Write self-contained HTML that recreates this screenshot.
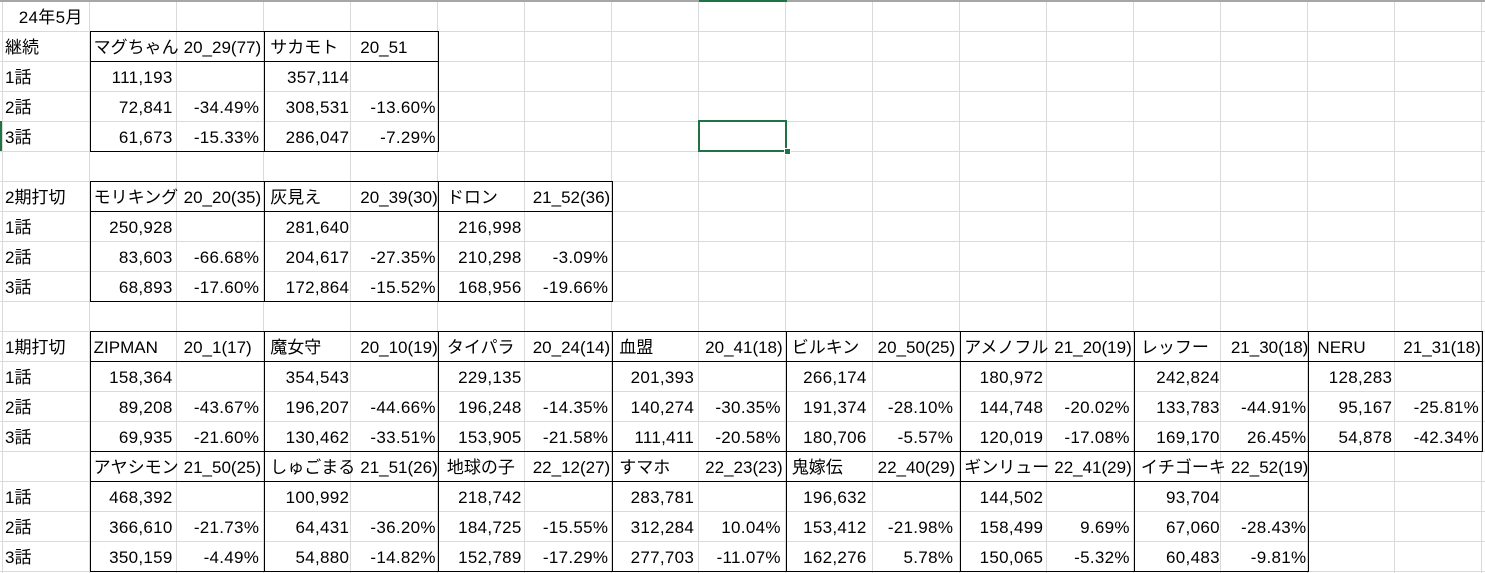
<!DOCTYPE html>
<html><head><meta charset="utf-8">
<style>
html,body{margin:0;padding:0;background:#fff;width:1485px;height:573px;overflow:hidden;position:relative}
.grid{position:absolute;left:0;top:0;width:1485px;height:573px;
background-image:
linear-gradient(to right, transparent 0, transparent 86px, #dadada 86px, #dadada 87px),
linear-gradient(to bottom, #dadada 0, #dadada 1px, transparent 1px, transparent 30px);
background-size:87px 100%, 100% 30px;
background-position:3px 0, 0 1px;}
.topline{position:absolute;left:0;top:0;width:1485px;height:2px;background:#a6a6a6}
.hsel{position:absolute;left:699px;top:0;width:88px;height:2px;background:#217346}
table{position:absolute;left:0;top:1px;border-collapse:collapse;table-layout:fixed;
font-family:"Liberation Sans","Noto Sans CJK JP",sans-serif;font-size:17px;color:#000}
td{height:30px;padding:4px 0 0 5px;white-space:nowrap;overflow:hidden;line-height:26px;box-sizing:border-box}
td.r{text-align:right;padding-right:6px;letter-spacing:0.3px}
.b{position:absolute;background:#000}
.sel{position:absolute;left:698px;top:120px;width:85px;height:28px;border:2px solid #217346}
.hd{position:absolute;left:784px;top:148px;width:5px;height:5px;background:#217346;border:1px solid #fff}
</style></head><body>
<div class="grid"></div>
<div class="topline"></div><div class="hsel"></div>
<table>
<colgroup><col style="width:90px"><col style="width:87px"><col style="width:87px"><col style="width:87px"><col style="width:87px"><col style="width:87px"><col style="width:87px"><col style="width:87px"><col style="width:87px"><col style="width:87px"><col style="width:87px"><col style="width:87px"><col style="width:87px"><col style="width:87px"><col style="width:87px"><col style="width:87px"><col style="width:87px"></colgroup>
<tr><td class="r">24年5月</td><td></td><td></td><td></td><td></td><td></td><td></td><td></td><td></td><td></td><td></td><td></td><td></td><td></td><td></td><td></td><td></td></tr>
<tr><td>継続</td><td>マグちゃん</td><td>20_29(77)</td><td>サカモト</td><td>20_51</td><td></td><td></td><td></td><td></td><td></td><td></td><td></td><td></td><td></td><td></td><td></td><td></td></tr>
<tr><td>1話</td><td class="r">111,193</td><td></td><td class="r">357,114</td><td></td><td></td><td></td><td></td><td></td><td></td><td></td><td></td><td></td><td></td><td></td><td></td><td></td></tr>
<tr><td>2話</td><td class="r">72,841</td><td class="r">-34.49%</td><td class="r">308,531</td><td class="r">-13.60%</td><td></td><td></td><td></td><td></td><td></td><td></td><td></td><td></td><td></td><td></td><td></td><td></td></tr>
<tr><td>3話</td><td class="r">61,673</td><td class="r">-15.33%</td><td class="r">286,047</td><td class="r">-7.29%</td><td></td><td></td><td></td><td></td><td></td><td></td><td></td><td></td><td></td><td></td><td></td><td></td></tr>
<tr><td></td><td></td><td></td><td></td><td></td><td></td><td></td><td></td><td></td><td></td><td></td><td></td><td></td><td></td><td></td><td></td><td></td></tr>
<tr><td>2期打切</td><td>モリキング</td><td>20_20(35)</td><td>灰見え</td><td>20_39(30)</td><td>ドロン</td><td>21_52(36)</td><td></td><td></td><td></td><td></td><td></td><td></td><td></td><td></td><td></td><td></td></tr>
<tr><td>1話</td><td class="r">250,928</td><td></td><td class="r">281,640</td><td></td><td class="r">216,998</td><td></td><td></td><td></td><td></td><td></td><td></td><td></td><td></td><td></td><td></td><td></td></tr>
<tr><td>2話</td><td class="r">83,603</td><td class="r">-66.68%</td><td class="r">204,617</td><td class="r">-27.35%</td><td class="r">210,298</td><td class="r">-3.09%</td><td></td><td></td><td></td><td></td><td></td><td></td><td></td><td></td><td></td><td></td></tr>
<tr><td>3話</td><td class="r">68,893</td><td class="r">-17.60%</td><td class="r">172,864</td><td class="r">-15.52%</td><td class="r">168,956</td><td class="r">-19.66%</td><td></td><td></td><td></td><td></td><td></td><td></td><td></td><td></td><td></td><td></td></tr>
<tr><td></td><td></td><td></td><td></td><td></td><td></td><td></td><td></td><td></td><td></td><td></td><td></td><td></td><td></td><td></td><td></td><td></td></tr>
<tr><td>1期打切</td><td>ZIPMAN</td><td>20_1(17)</td><td>魔女守</td><td>20_10(19)</td><td>タイパラ</td><td>20_24(14)</td><td>血盟</td><td>20_41(18)</td><td>ビルキン</td><td>20_50(25)</td><td>アメノフル</td><td>21_20(19)</td><td>レッフー</td><td>21_30(18)</td><td>NERU</td><td>21_31(18)</td></tr>
<tr><td>1話</td><td class="r">158,364</td><td></td><td class="r">354,543</td><td></td><td class="r">229,135</td><td></td><td class="r">201,393</td><td></td><td class="r">266,174</td><td></td><td class="r">180,972</td><td></td><td class="r">242,824</td><td></td><td class="r">128,283</td><td></td></tr>
<tr><td>2話</td><td class="r">89,208</td><td class="r">-43.67%</td><td class="r">196,207</td><td class="r">-44.66%</td><td class="r">196,248</td><td class="r">-14.35%</td><td class="r">140,274</td><td class="r">-30.35%</td><td class="r">191,374</td><td class="r">-28.10%</td><td class="r">144,748</td><td class="r">-20.02%</td><td class="r">133,783</td><td class="r">-44.91%</td><td class="r">95,167</td><td class="r">-25.81%</td></tr>
<tr><td>3話</td><td class="r">69,935</td><td class="r">-21.60%</td><td class="r">130,462</td><td class="r">-33.51%</td><td class="r">153,905</td><td class="r">-21.58%</td><td class="r">111,411</td><td class="r">-20.58%</td><td class="r">180,706</td><td class="r">-5.57%</td><td class="r">120,019</td><td class="r">-17.08%</td><td class="r">169,170</td><td class="r">26.45%</td><td class="r">54,878</td><td class="r">-42.34%</td></tr>
<tr><td></td><td>アヤシモン</td><td>21_50(25)</td><td>しゅごまる</td><td>21_51(26)</td><td>地球の子</td><td>22_12(27)</td><td>すマホ</td><td>22_23(23)</td><td>鬼嫁伝</td><td>22_40(29)</td><td>ギンリュー</td><td>22_41(29)</td><td>イチゴーキ</td><td>22_52(19)</td><td></td><td></td></tr>
<tr><td>1話</td><td class="r">468,392</td><td></td><td class="r">100,992</td><td></td><td class="r">218,742</td><td></td><td class="r">283,781</td><td></td><td class="r">196,632</td><td></td><td class="r">144,502</td><td></td><td class="r">93,704</td><td></td><td></td><td></td></tr>
<tr><td>2話</td><td class="r">366,610</td><td class="r">-21.73%</td><td class="r">64,431</td><td class="r">-36.20%</td><td class="r">184,725</td><td class="r">-15.55%</td><td class="r">312,284</td><td class="r">10.04%</td><td class="r">153,412</td><td class="r">-21.98%</td><td class="r">158,499</td><td class="r">9.69%</td><td class="r">67,060</td><td class="r">-28.43%</td><td></td><td></td></tr>
<tr><td>3話</td><td class="r">350,159</td><td class="r">-4.49%</td><td class="r">54,880</td><td class="r">-14.82%</td><td class="r">152,789</td><td class="r">-17.29%</td><td class="r">277,703</td><td class="r">-11.07%</td><td class="r">162,276</td><td class="r">5.78%</td><td class="r">150,065</td><td class="r">-5.32%</td><td class="r">60,483</td><td class="r">-9.81%</td><td></td><td></td></tr>
</table>

<div class="b" style="left:90px;top:31px;width:349px;height:1px"></div>
<div class="b" style="left:90px;top:61px;width:349px;height:1px"></div>
<div class="b" style="left:90px;top:151px;width:349px;height:1px"></div>
<div class="b" style="left:90px;top:31px;width:1px;height:121px"></div>
<div class="b" style="left:264px;top:31px;width:1px;height:121px"></div>
<div class="b" style="left:438px;top:31px;width:1px;height:121px"></div>
<div class="b" style="left:90px;top:181px;width:523px;height:1px"></div>
<div class="b" style="left:90px;top:211px;width:523px;height:1px"></div>
<div class="b" style="left:90px;top:301px;width:523px;height:1px"></div>
<div class="b" style="left:90px;top:181px;width:1px;height:121px"></div>
<div class="b" style="left:264px;top:181px;width:1px;height:121px"></div>
<div class="b" style="left:438px;top:181px;width:1px;height:121px"></div>
<div class="b" style="left:612px;top:181px;width:1px;height:121px"></div>
<div class="b" style="left:90px;top:331px;width:1393px;height:1px"></div>
<div class="b" style="left:90px;top:361px;width:1393px;height:1px"></div>
<div class="b" style="left:90px;top:451px;width:1393px;height:1px"></div>
<div class="b" style="left:90px;top:331px;width:1px;height:121px"></div>
<div class="b" style="left:264px;top:331px;width:1px;height:121px"></div>
<div class="b" style="left:438px;top:331px;width:1px;height:121px"></div>
<div class="b" style="left:612px;top:331px;width:1px;height:121px"></div>
<div class="b" style="left:786px;top:331px;width:1px;height:121px"></div>
<div class="b" style="left:960px;top:331px;width:1px;height:121px"></div>
<div class="b" style="left:1134px;top:331px;width:1px;height:121px"></div>
<div class="b" style="left:1308px;top:331px;width:1px;height:121px"></div>
<div class="b" style="left:1482px;top:331px;width:1px;height:121px"></div>
<div class="b" style="left:90px;top:481px;width:1219px;height:1px"></div>
<div class="b" style="left:90px;top:571px;width:1219px;height:1px"></div>
<div class="b" style="left:90px;top:451px;width:1px;height:121px"></div>
<div class="b" style="left:264px;top:451px;width:1px;height:121px"></div>
<div class="b" style="left:438px;top:451px;width:1px;height:121px"></div>
<div class="b" style="left:612px;top:451px;width:1px;height:121px"></div>
<div class="b" style="left:786px;top:451px;width:1px;height:121px"></div>
<div class="b" style="left:960px;top:451px;width:1px;height:121px"></div>
<div class="b" style="left:1134px;top:451px;width:1px;height:121px"></div>
<div class="b" style="left:1308px;top:451px;width:1px;height:121px"></div>

<div style="position:absolute;left:0;top:121px;width:2px;height:30px;background:#217346"></div>
<div class="sel"></div><div class="hd"></div>
</body></html>
